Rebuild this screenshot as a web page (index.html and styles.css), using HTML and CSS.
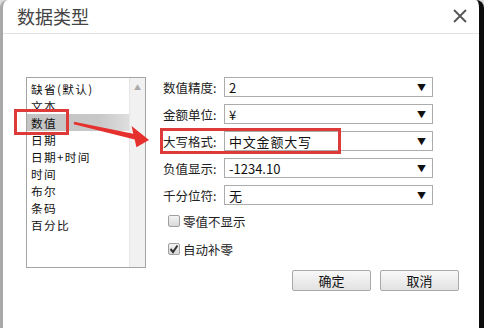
FILE: index.html
```html
<!DOCTYPE html>
<html lang="zh">
<head>
<meta charset="utf-8">
<link rel="stylesheet" href="styles.css">
</head>
<body>
<div class="dialog">
  <div class="header">
    <div class="title">数据类型</div>
    <svg class="close" width="14" height="14" viewBox="0 0 14 14"><path d="M1 1 L13 13 M13 1 L1 13" stroke="#555" stroke-width="1.8" fill="none"/></svg>
  </div>
  <div class="content">
    <div class="main">
      <div class="listbox">
        <ul class="items">
          <li>缺省(默认)</li>
          <li>文本</li>
          <li class="selected">数值</li>
          <li>日期</li>
          <li>日期+时间</li>
          <li>时间</li>
          <li>布尔</li>
          <li>条码</li>
          <li>百分比</li>
        </ul>
        <div class="scrollbar"><span class="up">▲</span></div>
      </div>
      <div class="form">
        <div class="row"><label>数值精度:</label><div class="select"><span>2</span><i>▼</i></div></div>
        <div class="row"><label>金额单位:</label><div class="select"><span>¥</span><i>▼</i></div></div>
        <div class="row"><label>大写格式:</label><div class="select"><span class="wide">中文金额大写</span><i>▼</i></div></div>
        <div class="row"><label>负值显示:</label><div class="select"><span>-1234.10</span><i>▼</i></div></div>
        <div class="row"><label>千分位符:</label><div class="select"><span>无</span><i>▼</i></div></div>
        <div class="check first"><span class="box"></span><span>零值不显示</span></div>
        <div class="check"><span class="box checked"><svg width="10" height="10" viewBox="0 0 10 10"><path d="M1.5 5 L4 8 L8.5 1.5" stroke="#333" stroke-width="2" fill="none"/></svg></span><span>自动补零</span></div>
      </div>
    </div>
    <div class="footer">
      <button class="btn">确定</button>
      <button class="btn">取消</button>
    </div>
  </div>
  <div class="mark mark-list"></div>
  <div class="mark mark-format"></div>
  <svg class="arrow" width="484" height="328" viewBox="0 0 484 328"><polygon points="74,121.8 133.3,133.7 131.6,125.9 149,140 136.4,147.3 134.7,139.5 73.8,124.2" fill="#e5302d"/></svg>
</div>
</body>
</html>
```
FILE: styles.css
```css
* { box-sizing: border-box; }
html, body { margin: 0; padding: 0; }
body {
  width: 484px;
  height: 328px;
  background: #dcdcdc;
  font-family: "Noto Sans CJK SC", "Noto Sans", sans-serif;
  color: #222;
  overflow: hidden;
}
.dialog {
  position: relative;
  width: 484px;
  height: 328px;
  background: #fff;
  border-radius: 8px 8px 0 0;
  border-left: 3px solid #a8a8a8;
  border-right: 5px solid #0c0c0c;
  display: flex;
  flex-direction: column;
}
.header {
  height: 34px;
  border-bottom: 1px solid #e3e3e3;
  display: flex;
  align-items: center;
  justify-content: space-between;
  padding: 0 12px 2px 14px;
}
.title {
  font-size: 18px;
  color: #444;
  line-height: 20px;
}
.close { margin-top: 1px; }
.content {
  padding: 43px 20px 0 23px;
  display: flex;
  flex-direction: column;
}
.main {
  display: flex;
  gap: 17px;
}
.listbox {
  width: 120px;
  height: 191px;
  border: 1px solid #a4a4a4;
  display: flex;
}
.items {
  list-style: none;
  margin: 0;
  padding: 2px 0 0 0;
  flex: 1;
  font-size: 11.7px;
  letter-spacing: 1.3px;
  color: #111;
}
.items li {
  height: 17px;
  line-height: 17px;
  padding-left: 4px;
}
.items li.selected {
  background: linear-gradient(to right, #c4c4c4 0%, #c8c8c8 70%, #dedede 100%);
}
.scrollbar {
  width: 16px;
  background: #f1f1f1;
  border-left: 1px solid #e6e6e6;
  display: flex;
  justify-content: center;
}
.up {
  font-size: 7px;
  color: #aaa;
  margin-top: 5px;
  line-height: 8px;
}
.form {
  display: flex;
  flex-direction: column;
  gap: 7px;
  padding-top: 0;
}
.row {
  display: flex;
  align-items: center;
  height: 20px;
}
.row label {
  width: 61px;
  font-size: 12.5px;
  color: #222;
}
.select {
  width: 209px;
  height: 20px;
  border: 1px solid #acacac;
  display: flex;
  align-items: center;
  justify-content: space-between;
  padding: 0 6px 0 4px;
  font-size: 13px;
  color: #111;
}
.select .wide { letter-spacing: 0.8px; }
.select i {
  font-style: normal;
  font-size: 9px;
  color: #111;
}
.check {
  display: flex;
  align-items: center;
  height: 14px;
  gap: 3px;
  padding-left: 5px;
  font-size: 12.5px;
  color: #222;
}
.check.first { margin-top: 2px; }
.check + .check { margin-top: 7px; }
.box {
  width: 12px;
  height: 12px;
  border: 1px solid #a0a0a0;
  border-radius: 2px;
  background: linear-gradient(#f4f4f4, #d8d8d8);
  display: flex;
  align-items: center;
  justify-content: center;
}
.footer {
  display: flex;
  justify-content: flex-end;
  gap: 9px;
  margin-top: 2px;
}
.btn {
  width: 79px;
  height: 21px;
  border: 1px solid #a9a9a9;
  border-radius: 2px;
  background: linear-gradient(#f8f8f8, #e2e2e2);
  font-family: "Noto Sans CJK SC", sans-serif;
  font-size: 13px;
  color: #111;
  padding: 0;
  line-height: 19px;
}
.mark {
  position: absolute;
  border: 3px solid #dd3a3a;
}
.mark-list {
  left: 11px;
  top: 109px;
  width: 55px;
  height: 26px;
}
.mark-format {
  left: 157px;
  top: 128px;
  width: 181px;
  height: 26px;
}
.arrow {
  position: absolute;
  left: -3px;
  top: 0;
}
```
